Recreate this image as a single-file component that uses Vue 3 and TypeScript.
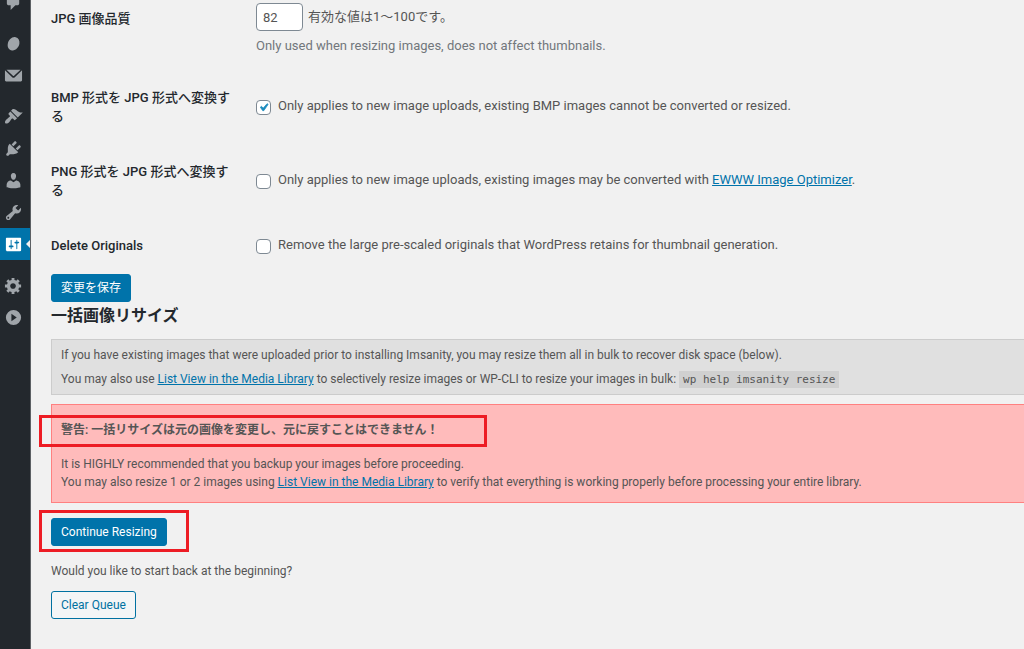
<script setup lang="ts">
import { ref } from 'vue'

interface MenuItem {
  name: string
  label: string
  path: string
  active?: boolean
  separated?: boolean
}

interface Option {
  id: string
  title: string
  text: string
  link?: string
  checked: boolean
}

const menu: MenuItem[] = [
  {
    name: 'comments',
    label: 'Comments',
    path: 'M5 2h9q.82 0 1.41.59T16 4v7q0 .82-.59 1.41T14 13h-2l-5 5v-5H5q-.82 0-1.41-.59T3 11V4q0-.82.59-1.41T5 2z',
  },
  {
    name: 'custom',
    label: 'Custom',
    separated: true,
    path: 'M12.2 3.4C15.3 4.1 16.7 7 16.2 10.3C15.6 14.1 12.3 17.7 8.6 17.3C5.1 16.9 3.3 13.8 4 10.3C4.8 6.1 8.5 2.6 12.2 3.4Z',
  },
  {
    name: 'mail',
    label: 'Mail',
    path: 'M2.6 4h14.8L10.6 10.3q-.6.5-1.2 0zM1 4.6L8.6 11.8q1.4 1.1 2.8 0L19 4.6V15q0 1.2-1.2 1.2H2.2Q1 16.2 1 15z',
  },
  {
    name: 'appearance',
    label: 'Appearance',
    separated: true,
    path: 'M14.48 11.06L7.41 3.99l1.5-1.5c.5-.56 2.3-.47 3.51.32 1.21.8 1.43 1.28 2.91 2.1 1.18.64 2.45 1.26 4.45.85zm-.71.71L6.7 4.7 4.93 6.47c-.39.39-.39 1.02 0 1.41l1.06 1.06c.39.39.39 1.03 0 1.42-.6.6-1.43 1.11-2.21 1.69-.35.26-.7.53-1.01.84C1.43 14.23.4 16.08 1.4 17.07c.99 1 2.84-.03 4.18-1.36.31-.31.58-.66.85-1.02.57-.78 1.08-1.61 1.69-2.21.39-.39 1.02-.39 1.41 0l1.06 1.06c.39.39 1.02.39 1.41 0z',
  },
  {
    name: 'plugins',
    label: 'Plugins',
    path: 'M13.11 4.36L9.87 7.6 8 5.73l3.24-3.24c.35-.34 1.05-.2 1.56.32.52.51.66 1.21.31 1.55zm-8 1.77l.91-1.12 9.01 9.01-1.19.84c-.71.71-2.63 1.16-3.82 1.16H6.14L4.9 17.26c-.59.59-1.54.59-2.12 0-.59-.58-.59-1.53 0-2.12l1.24-1.24v-3.88c0-1.13.4-3.19 1.09-3.89zm7.26 3.97l3.24-3.24c.34-.35 1.04-.21 1.55.31.52.51.66 1.21.31 1.55l-3.24 3.25z',
  },
  {
    name: 'users',
    label: 'Users',
    path: 'M10 9.25c-2.27 0-2.73-3.44-2.73-3.44C7 4.02 7.82 2 9.97 2c2.16 0 2.98 2.02 2.71 3.81 0 0-.41 3.44-2.68 3.44zm0 2.57L12.72 10c2.39 0 4.52 2.33 4.52 4.53v2.49s-3.65 1.13-7.24 1.13c-3.65 0-7.24-1.13-7.24-1.13v-2.49c0-2.25 1.94-4.48 4.47-4.48z',
  },
  {
    name: 'tools',
    label: 'Tools',
    path: 'M16.68 9.77c-1.34 1.34-3.3 1.67-4.95.99l-5.41 6.52c-.99.99-2.59.99-3.58 0s-.99-2.59 0-3.57l6.52-5.42c-.68-1.65-.35-3.61.99-4.95 1.28-1.28 3.12-1.62 4.72-1.06l-2.89 2.89 2.82 2.82 2.86-2.87c.53 1.58.18 3.39-1.08 4.65zM3.81 16.21c.4.39 1.04.39 1.43 0 .4-.4.4-1.04 0-1.43-.39-.4-1.03-.4-1.43 0-.39.39-.39 1.03 0 1.43z',
  },
  {
    name: 'settings',
    label: 'Settings',
    active: true,
    path: 'M18 16V4c0-.55-.45-1-1-1H3c-.55 0-1 .45-1 1v12c0 .55.45 1 1 1h14c.55 0 1-.45 1-1zM8 11h1c.55 0 1 .45 1 1s-.45 1-1 1H8v1.5c0 .28-.22.5-.5.5s-.5-.22-.5-.5V13H6c-.55 0-1-.45-1-1s.45-1 1-1h1V5.5c0-.28.22-.5.5-.5s.5.22.5.5V11zm5-2h-1c-.55 0-1-.45-1-1s.45-1 1-1h1V5.5c0-.28.22-.5.5-.5s.5.22.5.5V7h1c.55 0 1 .45 1 1s-.45 1-1 1h-1v5.5c0 .28-.22.5-.5.5s-.5-.22-.5-.5V9z',
  },
  {
    name: 'generic',
    label: 'Options',
    separated: true,
    path: 'M18 12h-2.18c-.17.7-.44 1.35-.81 1.93l1.54 1.54-2.1 2.1-1.54-1.54c-.58.36-1.23.63-1.91.79V19H8v-2.18c-.68-.16-1.33-.43-1.91-.79l-1.54 1.54-2.12-2.12 1.54-1.54c-.36-.58-.63-1.23-.79-1.91H1V9.03h2.17c.16-.7.44-1.35.8-1.94L2.43 5.55l2.1-2.1 1.54 1.54c.58-.37 1.24-.64 1.93-.81V2h3v2.18c.68.16 1.33.43 1.91.79l1.54-1.54 2.12 2.12-1.54 1.54c.36.59.64 1.24.8 1.94H18V12zm-8.5 1.5c1.66 0 3-1.34 3-3s-1.34-3-3-3-3 1.34-3 3 1.34 3 3 3z',
  },
  {
    name: 'collapse',
    label: 'Collapse menu',
    path: 'M10 2a8 8 0 1 1 0 16a8 8 0 1 1 0-16zM7.8 6v8l5.6-4z',
  },
]

const quality = ref('82')

const options = ref<Option[]>([
  {
    id: 'bmp',
    title: 'BMP 形式を JPG 形式へ変換する',
    text: 'Only applies to new image uploads, existing BMP images cannot be converted or resized.',
    checked: true,
  },
  {
    id: 'png',
    title: 'PNG 形式を JPG 形式へ変換する',
    text: 'Only applies to new image uploads, existing images may be converted with ',
    link: 'EWWW Image Optimizer',
    checked: false,
  },
  {
    id: 'originals',
    title: 'Delete Originals',
    text: 'Remove the large pre-scaled originals that WordPress retains for thumbnail generation.',
    checked: false,
  },
])
</script>

<template>
  <div class="admin">
    <nav class="sidebar" aria-label="Admin menu">
      <ul class="menu">
        <li v-for="item in menu" :key="item.name" :class="{ separated: item.separated }">
          <a href="#" class="menu-link" :class="{ active: item.active }" :aria-label="item.label">
            <svg class="icon" viewBox="0 0 20 20" aria-hidden="true">
              <path :d="item.path" fill-rule="evenodd" />
            </svg>
          </a>
        </li>
      </ul>
    </nav>

    <main class="content">
      <table class="form-table">
        <tbody>
          <tr>
            <th scope="row"><label for="quality">JPG 画像品質</label></th>
            <td>
              <div class="field">
                <input id="quality" v-model="quality" class="number" type="text" />
                <span>有効な値は1～100です。</span>
              </div>
              <p class="description">Only used when resizing images, does not affect thumbnails.</p>
            </td>
          </tr>
          <tr v-for="option in options" :key="option.id">
            <th scope="row"><label :for="option.id">{{ option.title }}</label></th>
            <td>
              <div class="check-row">
                <span class="check">
                  <input :id="option.id" v-model="option.checked" type="checkbox" />
                  <svg v-if="option.checked" class="tick" viewBox="0 0 20 20" aria-hidden="true">
                    <path d="M14.83 4.89l1.34.94-5.81 8.38H9.02L5.78 9.67l1.34-1.25 2.57 2.4z" />
                  </svg>
                </span>
                <span>{{ option.text }}<template v-if="option.link"><a href="#">{{ option.link }}</a>.</template></span>
              </div>
            </td>
          </tr>
        </tbody>
      </table>

      <button type="button" class="button primary">変更を保存</button>

      <h2>一括画像リサイズ</h2>

      <section class="notice info">
        <p>If you have existing images that were uploaded prior to installing Imsanity, you may resize them all in bulk to recover disk space (below).</p>
        <p>You may also use <a href="#">List View in the Media Library</a> to selectively resize images or WP-CLI to resize your images in bulk: <code>wp help imsanity resize</code></p>
      </section>

      <section class="notice warning">
        <h3 class="marked">警告: 一括リサイズは元の画像を変更し、元に戻すことはできません！</h3>
        <p>It is HIGHLY recommended that you backup your images before proceeding.<br />You may also resize 1 or 2 images using <a href="#">List View in the Media Library</a> to verify that everything is working properly before processing your entire library.</p>
      </section>

      <div class="marked action">
        <button type="button" class="button primary">Continue Resizing</button>
      </div>

      <p class="question">Would you like to start back at the beginning?</p>
      <button type="button" class="button">Clear Queue</button>
    </main>
  </div>
</template>

<style>
html,
body {
  margin: 0;
  background: #f1f1f1;
}
</style>

<style scoped>
.admin {
  display: flex;
  min-height: 100vh;
  overflow: hidden;
  background: #f1f1f1;
  color: #555;
  font-family: Roboto, "Noto Sans CJK JP", sans-serif;
  font-size: 12px;
  line-height: 18px;
}

.sidebar {
  flex: none;
  width: 30px;
  background: #23282d;
  border-right: 1px solid #5c6064;
}

.menu {
  list-style: none;
  margin: -14px 0 0;
  padding: 0;
}

.separated {
  padding-top: 9px;
}

.menu-link {
  position: relative;
  display: flex;
  align-items: center;
  height: 32px;
  padding-left: 4px;
}

.menu-link.active {
  background: #0073aa;
}

.menu-link.active::after {
  content: "";
  position: absolute;
  right: 0;
  top: 12px;
  border: 4px solid transparent;
  border-left: 0;
  border-right-color: #f1f1f1;
}

.icon {
  width: 19px;
  height: 19px;
  fill: #a0a5aa;
}

.active .icon {
  fill: #fff;
}

.content {
  flex: 1;
  min-width: 0;
  padding-left: 20px;
}

.form-table {
  width: 100%;
  margin: -9px 0 1px;
  border-collapse: collapse;
  font-size: 13px;
}

th {
  box-sizing: border-box;
  width: 205px;
  padding: 18px 24px 18px 0;
  color: #23282d;
  font-weight: 500;
  line-height: 19px;
  text-align: left;
  vertical-align: top;
}

td {
  padding: 12px 0 14px;
  vertical-align: middle;
}

p {
  margin: 0;
}

a {
  color: #0073aa;
}

.field {
  display: flex;
  align-items: center;
  gap: 5px;
}

.number {
  box-sizing: border-box;
  width: 47px;
  height: 28px;
  padding: 0 6px;
  border: 1px solid #7e8993;
  border-radius: 4px;
  background: #fff;
  color: #555;
  font: inherit;
}

.description {
  margin-top: 5px;
  color: #72777c;
  line-height: 20px;
}

.check-row {
  display: flex;
  align-items: flex-end;
  gap: 7px;
}

.check {
  display: grid;
  flex: none;
  width: 15px;
  height: 15px;
}

.check input {
  grid-area: 1 / 1;
  appearance: none;
  box-sizing: border-box;
  width: 15px;
  height: 15px;
  margin: 0;
  border: 1px solid #7e8993;
  border-radius: 4px;
  background: #fff;
}

.tick {
  grid-area: 1 / 1;
  width: 15px;
  height: 15px;
  fill: #1e8cbe;
  stroke: #1e8cbe;
  pointer-events: none;
}

.button {
  display: block;
  height: 28px;
  padding: 0 9px;
  border: 1px solid #0071a1;
  border-radius: 3px;
  background: #f3f5f6;
  color: #0071a1;
  font: inherit;
  line-height: 26px;
  white-space: nowrap;
}

.button.primary {
  border-color: #0073aa;
  background: #0073aa;
  color: #fff;
}

h2 {
  margin: 0 0 9px;
  color: #23282d;
  font-size: 16px;
  font-weight: 600;
  line-height: 28px;
}

.notice {
  border: 1px solid #ccc;
  border-right: 0;
}

.info {
  padding: 3px 9px;
  background: #e0e0e0;
  line-height: 24px;
}

code {
  padding: 2px 4px;
  background: #d0d0d0;
  font-family: "DejaVu Sans Mono", monospace;
  font-size: 11px;
  line-height: 12px;
}

.warning {
  margin-top: 9px;
  padding: 16px 9px 11px;
  border-color: #ff8080;
  background: #ffbbbb;
}

h3 {
  margin: 0 0 16px;
  font-size: 12px;
  font-weight: 600;
  line-height: 18px;
}

.marked {
  position: relative;
  width: fit-content;
}

.marked::after {
  content: "";
  position: absolute;
  inset: -6px -48px -8px -22px;
  border: 3px solid #ed1c24;
  pointer-events: none;
}

.action {
  margin-top: 15px;
}

.action::after {
  inset: -8px -22px -6px -12px;
}

.question {
  margin: 16px 0 11px;
}
</style>
